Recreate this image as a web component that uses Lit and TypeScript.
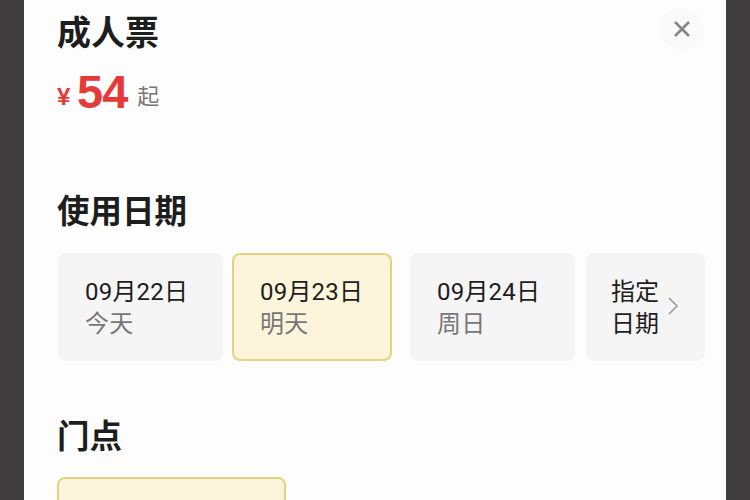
import { LitElement, html, css } from "lit";
import { customElement } from "lit/decorators.js";

@customElement("app-root")
export class AppRoot extends LitElement {
  static styles = css`
    :host {
      display: block;
      width: 750px;
      height: 500px;
      overflow: hidden;
      background: #403e3e;
      font-family: "Noto Sans CJK SC", "Noto Sans", sans-serif;
    }
    .panel {
      position: relative;
      margin: 0 24px;
      width: 702px;
      height: 500px;
      box-sizing: border-box;
      padding: 11px 0 0 33px;
      background: #fdfdfd;
      overflow: hidden;
    }
    .title {
      font-size: 34px;
      line-height: 40px;
      font-weight: 700;
      color: #1d1d1d;
    }
    .price {
      display: flex;
      align-items: center;
      height: 52px;
      margin-top: 15px;
      color: #e53a37;
    }
    .yen {
      font-size: 24px;
      font-weight: 700;
      font-family: "Liberation Sans", sans-serif;
      width: 20px;
      padding-top: 10px;
    }
    .num {
      font-size: 47px;
      line-height: 52px;
      font-weight: 700;
      font-family: "Liberation Sans", sans-serif;
      letter-spacing: -1px;
    }
    .from { font-size: 22px; color: #77777a; margin-left: 10px; padding-top: 4px; }
    h2 {
      margin: 0;
      font-size: 32.5px;
      line-height: 40px;
      font-weight: 700;
      color: #1d1d1d;
    }
    .sec1 { margin-top: 71px; }
    .sec2 { margin-top: 53px; }
    .dates {
      display: flex;
      margin-top: 24px;
      height: 108px;
    }
    .card {
      box-sizing: border-box;
      border-radius: 8px;
      background: #f6f5f5;
      padding: 23px 0 0 27px;
      font-size: 24px;
      line-height: 32px;
      letter-spacing: 0.2px;
      color: #1d1d1d;
      font-family: Roboto, "Noto Sans CJK SC", sans-serif;
    }
    .c1 { width: 165px; margin-left: 1px; margin-right: 9px; }
    .c2 { width: 160px; margin-right: 18px; background: #fcf5dc; border: 2px solid #e2d47c; padding: 21px 0 0 26px; }
    .c3 { width: 165px; margin-right: 11px; }
    .c4 {
      width: 119px;
      padding: 23px 0 0 25px;
      display: flex;
      align-items: flex-start;
      letter-spacing: 0;
    }
    .pick { flex: none; width: 48px; }
    .c4 svg { margin: 21px 0 0 8px; }
    .sub { color: #77777a; }
    .close {
      position: absolute;
      top: 8px;
      right: 22px;
      width: 44px;
      height: 42px;
      border-radius: 50%;
      background: #fafafa;
      display: flex;
      align-items: center;
      justify-content: center;
    }
    .store {
      margin-top: 23px;
      width: 229px;
      height: 60px;
      box-sizing: border-box;
      border-radius: 8px;
      background: #fcf5dc;
      border: 2px solid #e2d47c;
    }
  `;

  render() {
    return html`
      <div class="panel">
        <div class="title">成人票</div>
        <div class="price">
          <span class="yen">¥</span><span class="num">54</span><span class="from">起</span>
        </div>
        <h2 class="sec1">使用日期</h2>
        <div class="dates">
          <div class="card c1"><div>09月22日</div><div class="sub">今天</div></div>
          <div class="card c2"><div>09月23日</div><div class="sub">明天</div></div>
          <div class="card c3"><div>09月24日</div><div class="sub">周日</div></div>
          <div class="card c4">
            <div class="pick"><div>指定</div><div>日期</div></div>
            <svg width="12" height="18" viewBox="0 0 12 18" fill="none" stroke="#9a9a9a" stroke-width="1.6">
              <path d="M2 1l8 8-8 8" />
            </svg>
          </div>
        </div>
        <h2 class="sec2">门点</h2>
        <div class="store"></div>
        <div class="close">
          <svg width="18" height="18" viewBox="0 0 18 18" fill="none" stroke="#858585" stroke-width="2.6">
            <path d="M2 2l14 14M16 2L2 16" />
          </svg>
        </div>
      </div>
    `;
  }
}
